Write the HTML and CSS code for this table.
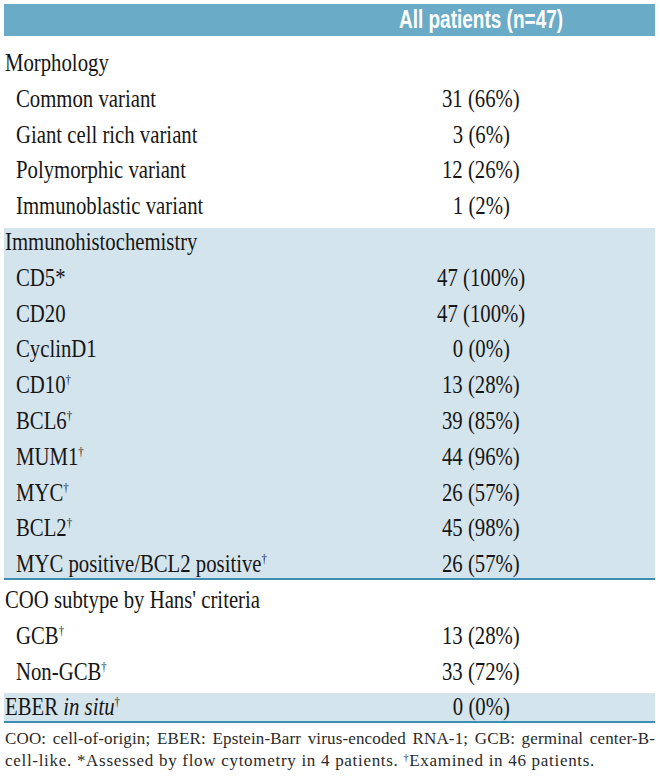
FILE: index.html
```html
<!DOCTYPE html>
<html lang="en">
<head>
<meta charset="utf-8">
<title>All patients (n=47)</title>
<link rel="stylesheet" href="styles.css">
</head>
<body>
<div class="table">
  <div class="head">
    <div class="label"></div>
    <div class="value"><span class="hx">All patients (n=47)</span></div>
  </div>

  <div class="group">
    <div class="row sec"><div class="label"><span class="t">Morphology</span></div><div class="value"></div></div>
    <div class="row"><div class="label"><span class="t">Common variant</span></div><div class="value"><span class="t">31 (66%)</span></div></div>
    <div class="row"><div class="label"><span class="t">Giant cell rich variant</span></div><div class="value"><span class="t">3 (6%)</span></div></div>
    <div class="row"><div class="label"><span class="t">Polymorphic variant</span></div><div class="value"><span class="t">12 (26%)</span></div></div>
    <div class="row"><div class="label"><span class="t">Immunoblastic variant</span></div><div class="value"><span class="t">1 (2%)</span></div></div>
  </div>

  <div class="group band">
    <div class="row sec"><div class="label"><span class="t">Immunohistochemistry</span></div><div class="value"></div></div>
    <div class="row"><div class="label"><span class="t">CD5*</span></div><div class="value"><span class="t">47 (100%)</span></div></div>
    <div class="row"><div class="label"><span class="t">CD20</span></div><div class="value"><span class="t">47 (100%)</span></div></div>
    <div class="row"><div class="label"><span class="t">CyclinD1</span></div><div class="value"><span class="t">0 (0%)</span></div></div>
    <div class="row"><div class="label"><span class="t">CD10<sup>†</sup></span></div><div class="value"><span class="t">13 (28%)</span></div></div>
    <div class="row"><div class="label"><span class="t">BCL6<sup>†</sup></span></div><div class="value"><span class="t">39 (85%)</span></div></div>
    <div class="row"><div class="label"><span class="t">MUM1<sup>†</sup></span></div><div class="value"><span class="t">44 (96%)</span></div></div>
    <div class="row"><div class="label"><span class="t">MYC<sup>†</sup></span></div><div class="value"><span class="t">26 (57%)</span></div></div>
    <div class="row"><div class="label"><span class="t">BCL2<sup>†</sup></span></div><div class="value"><span class="t">45 (98%)</span></div></div>
    <div class="row"><div class="label"><span class="t">MYC positive/BCL2 positive<sup>†</sup></span></div><div class="value"><span class="t">26 (57%)</span></div></div>
  </div>

  <div class="group">
    <div class="row sec"><div class="label"><span class="t">COO subtype by Hans' criteria</span></div><div class="value"></div></div>
    <div class="row"><div class="label"><span class="t">GCB<sup>†</sup></span></div><div class="value"><span class="t">13 (28%)</span></div></div>
    <div class="row"><div class="label"><span class="t">Non-GCB<sup>†</sup></span></div><div class="value"><span class="t">33 (72%)</span></div></div>
  </div>

  <div class="group band">
    <div class="row sec"><div class="label"><span class="t">EBER <i>in situ</i><sup>†</sup></span></div><div class="value"><span class="t">0 (0%)</span></div></div>
  </div>
</div>

<div class="notes">
  <div class="line1">COO: cell-of-origin; EBER: Epstein-Barr virus-encoded RNA-1; GCB: germinal center-B-</div>
  <div class="line2">cell-like. *Assessed by flow cytometry in 4 patients. <sup>†</sup>Examined in 46 patients.</div>
</div>
</body>
</html>
```

FILE: styles.css
```css
html, body {
  margin: 0;
  padding: 0;
  background: #ffffff;
}

body {
  padding: 4px 5px 0 4px;
  width: 651px;
  color: #161616;
  font-family: "Liberation Serif", "Times New Roman", serif;
}

.table {
  display: flex;
  flex-direction: column;
  gap: 5.8px;
}

.head {
  display: flex;
  height: 32px;
  background: #6aabc7;
  margin-bottom: 7.2px;
}

.label {
  flex: 1;
  min-width: 0;
}

.value {
  width: 348px;
  text-align: center;
}

.hx {
  display: inline-block;
  font-family: "Liberation Sans", Arial, sans-serif;
  font-weight: bold;
  font-size: 25px;
  line-height: 31px;
  color: #ffffff;
  transform: scaleX(0.76);
  transform-origin: center;
  white-space: nowrap;
}

.group {
  display: flex;
  flex-direction: column;
  gap: 7.8px;
  border-bottom: 2px solid transparent;
}

.band {
  background: #d4e4ec;
  border-bottom-color: #3d8db4;
}

.row {
  display: flex;
  height: 28px;
  font-size: 25px;
  line-height: 27px;
}

.row .label {
  padding-left: 12px;
}

.row.sec .label {
  padding-left: 1px;
}

.t {
  display: inline-block;
  white-space: nowrap;
  transform: scaleX(0.83);
  transform-origin: left center;
}

.value .t {
  transform-origin: center;
}

.t sup {
  font-size: 13px;
  vertical-align: 9px;
  line-height: 0;
}

.t i {
  font-style: italic;
}

.notes {
  margin-top: 5px;
  font-family: "Liberation Serif", "Times New Roman", serif;
  font-size: 17px;
  letter-spacing: 0.7px;
  line-height: 21.5px;
  color: #2a2a2a;
  padding-left: 1px;
}

.line1 {
  letter-spacing: 0.15px;
  text-align: justify;
  text-align-last: justify;
}

.notes sup {
  font-size: 10px;
  vertical-align: 5px;
  line-height: 0;
}
```
